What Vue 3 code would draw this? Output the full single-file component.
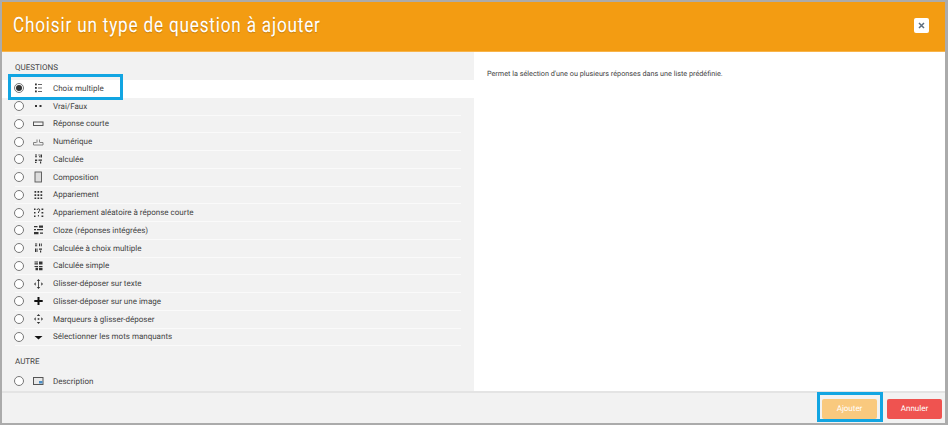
<script setup>
const questions = [
  { label: 'Choix multiple', icon: 'list', selected: true },
  { label: 'Vrai/Faux', icon: 'dots' },
  { label: 'Réponse courte', icon: 'short' },
  { label: 'Numérique', icon: 'num' },
  { label: 'Calculée', icon: 'calc' },
  { label: 'Composition', icon: 'essay' },
  { label: 'Appariement', icon: 'match' },
  { label: 'Appariement aléatoire à réponse courte', icon: 'rand' },
  { label: 'Cloze (réponses intégrées)', icon: 'cloze' },
  { label: 'Calculée à choix multiple', icon: 'calcm' },
  { label: 'Calculée simple', icon: 'calcs' },
  { label: 'Glisser-déposer sur texte', icon: 'ddt' },
  { label: 'Glisser-déposer sur une image', icon: 'plus' },
  { label: 'Marqueurs à glisser-déposer', icon: 'ddm' },
  { label: 'Sélectionner les mots manquants', icon: 'caret' },
]
const others = [{ label: 'Description', icon: 'desc' }]
</script>

<template>
  <div class="frame">
    <div class="dialog">
      <header class="head">
        <h1 class="title">Choisir un type de question à ajouter</h1>
        <button class="close" aria-label="Fermer">
          <svg width="7" height="7" viewBox="0 0 7 7"><path d="M1 1l5 5M6 1l-5 5" stroke="#5f6f7f" stroke-width="1.5" fill="none" /></svg>
        </button>
      </header>
      <main class="body">
        <section class="left">
          <h2 class="group first">QUESTIONS</h2>
          <label v-for="q in questions" :key="q.label" class="row" :class="{ selected: q.selected }">
            <span class="radio" :class="{ on: q.selected }"></span>
            <span class="ico">
              <svg width="12" height="12" viewBox="0 0 12 12" fill="#333">
                <g v-if="q.icon === 'list'">
                  <rect x="3" y="1.500" width="1.800" height="1.800" /><rect x="3" y="5" width="1.800" height="1.800" /><rect x="3" y="8.500" width="1.800" height="1.800" />
                  <rect x="6" y="2" width="4" height="1" fill="#666" /><rect x="6" y="5.500" width="4" height="1" fill="#666" /><rect x="6" y="9" width="4" height="1" fill="#666" />
                </g>
                <g v-else-if="q.icon === 'dots'">
                  <rect x="3" y="5" width="2" height="2" /><rect x="7.500" y="5" width="2" height="2" />
                </g>
                <rect v-else-if="q.icon === 'short'" x="1.500" y="4" width="9.500" height="3.500" fill="#f2f2f2" stroke="#555" stroke-width="1" />
                <path v-else-if="q.icon === 'num'" d="M1.500 6.500v2.500h9.500V6.500H8M1.500 6.500h3M5 3.500v3M7.500 3.500v3" fill="none" stroke="#777" stroke-width="0.900" />
                <path v-else-if="q.icon === 'calc'" d="M3 1.500h2v1H3zM3 3.200h2v1H3zM6.500 1.500h1.200v1H6.500zM8.500 1.500h1.500v3H8.500zM7 3.200h1v1H7zM3 6.500h2.200V8H3zM3 8.800h1.500V10H3zM6.500 6.500H10v1.200H6.500zM8 8.500h1.200v2H8z" />
                <rect v-else-if="q.icon === 'essay'" x="3" y="1" width="6.500" height="10" fill="#ddd" stroke="#555" stroke-width="0.900" />
                <path v-else-if="q.icon === 'match'" d="M2.500 2h1.700v1.700H2.500zM5.500 2h1.700v1.700H5.500zM8.500 2h1.700v1.700H8.500zM2.500 5.200h1.700v1.700H2.500zM5.500 5.200h1.700v1.700H5.500zM8.500 5.200h1.700v1.700H8.500zM2.500 8.400h1.700v1.700H2.500zM5.500 8.400h1.700v1.700H5.500zM8.500 8.400h1.700v1.700H8.500z" />
                <g v-else-if="q.icon === 'rand'">
                  <path d="M2 1.500h1.500V3H2zM2 5h1.500v1.500H2zM2 8.500h1.500V10H2zM9.500 1.500h1.800V3H9.500zM9.500 5h1.800v1.500H9.500zM9.500 8.500h1.800V10H9.500z" />
                  <path d="M5 3c.2-1.600 2.800-1.600 2.800 0 0 1.300-1.400 1.200-1.400 3M6.400 8v1.500" fill="none" stroke="#333" stroke-width="1" />
                </g>
                <path v-else-if="q.icon === 'cloze'" d="M2 2h3.500v1.200H2zM7 1.500h4v2.300H7zM2 5h2v1.200H2zM5 5h6v1.200H5zM2 8h4.500v2.300H2zM8 8.500h3v1.200H8z" />
                <path v-else-if="q.icon === 'calcm'" d="M3 1.500h2.200v1H3zM3 3.200h2.200v1H3zM7 1.500h1v2.800H7zM8.800 1.500h1v2.800h-1zM3 6.500h1V10H3zM4.500 6.500h1V10h-1zM7 6.500h3v1.200H7zM8 8.500h1.200v2H8z" />
                <path v-else-if="q.icon === 'calcs'" d="M2.500 1.500H6v1.100H2.500zM2.500 3.300H6v1.100H2.500zM7 1.500h3.500v3H7zM2.500 6H6v1.100H2.500zM3.500 7.800H6v2.400H3.500zM7 6h3.500v1.100H7zM7 7.800h3.500v2.400H7z" />
                <g v-else-if="q.icon === 'ddt'">
                  <path d="M6.500 1l1.700 2H4.800zM6.500 11l1.700-2H4.800zM2 6l1.700-1.700v3.400zM11 6L9.300 4.300v3.400z" /><rect x="6" y="3" width="1" height="6" fill="#555" />
                </g>
                <path v-else-if="q.icon === 'plus'" d="M5.500 2h2v3h3.200v2H7.500v3h-2V7H2.300V5h3.200z" fill="#111" />
                <g v-else-if="q.icon === 'ddm'">
                  <path d="M6.500 1l1.700 2H4.800zM6.500 11l1.700-2H4.800zM2 6l1.700-1.700v3.400zM11 6L9.300 4.300v3.400z" /><rect x="5.700" y="5.200" width="1.600" height="1.600" />
                </g>
                <path v-else-if="q.icon === 'caret'" d="M2.500 5h8l-4 3.500z" fill="#111" />
              </svg>
            </span>
            <span class="text">{{ q.label }}</span>
          </label>
          <h2 class="group second">AUTRE</h2>
          <label v-for="q in others" :key="q.label" class="row plain">
            <span class="radio"></span>
            <span class="ico">
              <svg width="12" height="12" viewBox="0 0 12 12">
                <rect x="1.500" y="2.500" width="9.500" height="7" fill="#e8e8e8" stroke="#555" stroke-width="1" /><rect x="7" y="6" width="3.500" height="2.500" fill="#4b8fc7" />
              </svg>
            </span>
            <span class="text">{{ q.label }}</span>
          </label>
        </section>
        <section class="right">Permet la sélection d'une ou plusieurs réponses dans une liste prédéfinie.</section>
      </main>
      <footer class="foot">
        <button class="btn add">Ajouter</button>
        <button class="btn cancel">Annuler</button>
      </footer>
      <div class="mark mark-a"></div>
      <div class="mark mark-b"></div>
    </div>
  </div>
</template>

<style>
html, body { margin: 0; background: #ababab; }
</style>

<style scoped>
.frame {
  width: 948px;
  height: 425px;
  box-sizing: border-box;
  padding: 2px 3px 2px 2px;
  font-family: Roboto, "Liberation Sans", sans-serif;
  text-rendering: geometricPrecision;
}
.dialog {
  position: relative;
  height: 100%;
  display: flex;
  flex-direction: column;
  background: #f2f2f2;
  overflow: hidden;
}
.head {
  height: 50px;
  flex: none;
  box-sizing: border-box;
  display: flex;
  align-items: center;
  justify-content: space-between;
  padding: 0 16px 2px 11px;
  background: #f39c12;
  border-bottom: 1px solid #f8b44a;
}
.title {
  margin: 0;
  color: #fff;
  font-family: Roboto, sans-serif;
  font-size: 21px;
  font-weight: 400;
  letter-spacing: 1px;
  white-space: nowrap;
  transform: scaleX(.816);
  transform-origin: left center;
  text-shadow: 0 1px 1px rgba(0,0,0,.2);
}
.close {
  width: 15px;
  height: 15px;
  padding: 0;
  border: 0;
  border-radius: 2px;
  background: #fff;
  display: flex;
  align-items: center;
  justify-content: center;
}
.body {
  flex: 1;
  min-height: 0;
  display: flex;
}
.left {
  width: 472px;
  flex: none;
  background: #f2f2f2;
}
.group {
  margin: 0;
  padding-left: 13px;
  color: #444;
  font-size: 8px;
  font-weight: 400;
  line-height: 10px;
}
.first { padding-top: 11px; height: 28px; box-sizing: border-box; }
.second { padding-top: 11px; padding-bottom: 5px; }
.row {
  height: 17.75px;
  margin-left: 13px;
  margin-right: 13px;
  box-sizing: border-box;
  display: flex;
  align-items: center;
  border-bottom: 1px solid #fafafa;
  color: #444;
  font-size: 8px;
}
.row.selected {
  margin: 0;
  padding: 0 13px;
  background: #fff;
  border-bottom-color: #fff;
}
.row.plain { border-bottom: 0; }
.radio {
  width: 8px;
  height: 8px;
  flex: none;
  box-sizing: content-box;
  border: 1px solid #777;
  border-radius: 50%;
  background: #fff;
  position: relative;
  margin-left: -1px;
}
.radio.on::after {
  content: "";
  position: absolute;
  inset: 1px;
  border-radius: 50%;
  background: #333;
}
.ico {
  width: 12px;
  height: 12px;
  margin-left: 7.500px;
  flex: none;
  display: flex;
}
.text {
  margin-left: 9.500px;
  white-space: nowrap;
}
.right {
  flex: 1;
  background: #fff;
  padding: 17px 13px;
  font-size: 7.250px;
  color: #444;
  line-height: 10px;
}
.foot {
  height: 32px;
  flex: none;
  box-sizing: border-box;
  display: flex;
  align-items: center;
  justify-content: flex-end;
  gap: 10px;
  padding: 1px 3px 0 0;
  background: #f2f2f2;
  border-top: 2px solid #e4e4e4;
}
.btn {
  width: 55px;
  height: 20px;
  border: 0;
  border-radius: 2px;
  color: #fff;
  font-family: Roboto, "Liberation Sans", sans-serif;
  font-size: 8px;
  padding: 0;
  text-rendering: geometricPrecision;
}
.add { background: #f9c97e; }
.cancel { background: #ef5350; }
.mark {
  position: absolute;
  box-sizing: border-box;
  border: 3px solid #12a5e2;
  pointer-events: none;
}
.mark-a { left: 6px; top: 72px; width: 115px; height: 26px; }
.mark-b { left: 815px; top: 390px; width: 66px; height: 30px; }
</style>
